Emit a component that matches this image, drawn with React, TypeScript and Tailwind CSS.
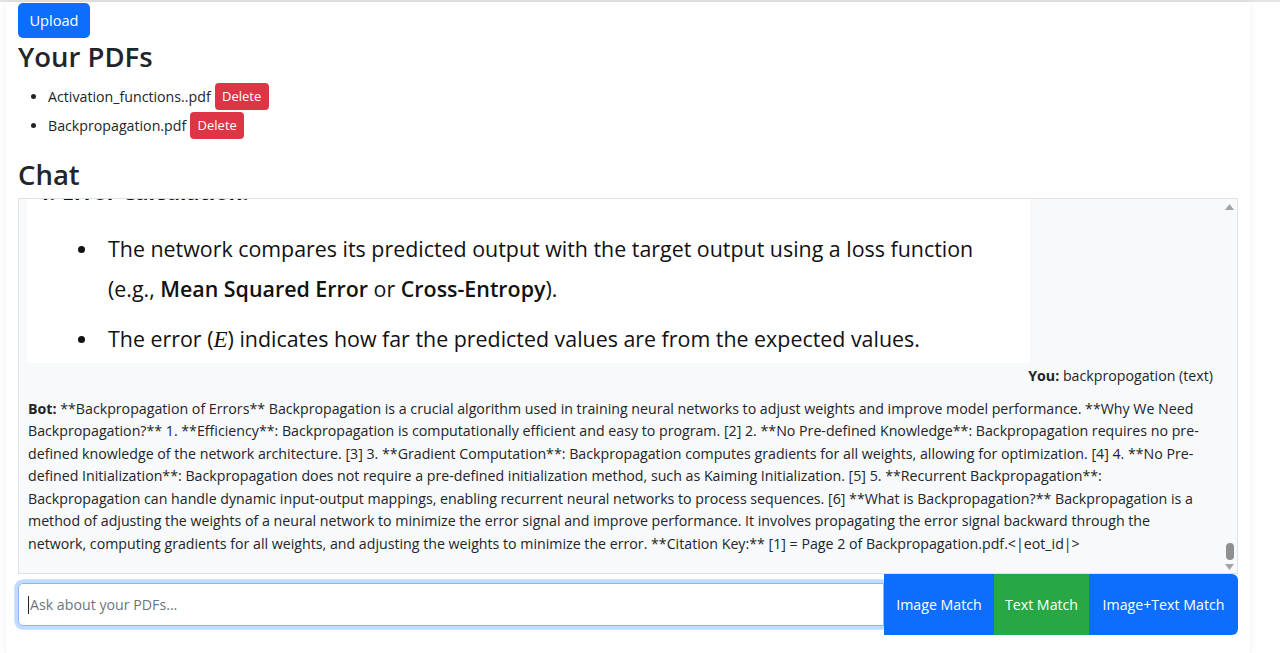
import React from "react";

const botLines: React.ReactNode[] = [
  <>
    <b className="font-bold">Bot:</b> **Backpropagation of Errors** Backpropagation is a crucial algorithm used in training neural networks to adjust weights and improve model performance. **Why We Need
  </>,
  "Backpropagation?** 1. **Efficiency**: Backpropagation is computationally efficient and easy to program. [2] 2. **No Pre-defined Knowledge**: Backpropagation requires no pre-",
  "defined knowledge of the network architecture. [3] 3. **Gradient Computation**: Backpropagation computes gradients for all weights, allowing for optimization. [4] 4. **No Pre-",
  "defined Initialization**: Backpropagation does not require a pre-defined initialization method, such as Kaiming Initialization. [5] 5. **Recurrent Backpropagation**:",
  "Backpropagation can handle dynamic input-output mappings, enabling recurrent neural networks to process sequences. [6] **What is Backpropagation?** Backpropagation is a",
  "method of adjusting the weights of a neural network to minimize the error signal and improve performance. It involves propagating the error signal backward through the",
  "network, computing gradients for all weights, and adjusting the weights to minimize the error. **Citation Key:** [1] = Page 2 of Backpropagation.pdf.<|eot_id|>",
];

function Dot() {
  return (
    <span className="flex w-[81px] shrink-0 items-center pl-[51px]">
      <span className="h-[7px] w-[7px] rounded-full bg-[#111]" />
    </span>
  );
}

function PdfSnippet() {
  return (
    <div className="flex w-[1003px] shrink-0 flex-col bg-white pb-[3px] text-[21.4px] text-[#111]">
      <div className="flex h-[26px] items-center leading-[26px] font-bold">
        <span className="w-[35px] pl-[10px]">4.</span>
        <span>Error Calculation:</span>
      </div>
      <div className="mt-[24px] flex leading-[40px]">
        <Dot />
        <span>The network compares its predicted output with the target output using a loss function</span>
      </div>
      <div className="flex leading-[40px]">
        <span className="w-[81px] shrink-0"></span>
        <span>
          (e.g., <b className="font-semibold">Mean Squared Error</b> or <b className="font-semibold">Cross-Entropy</b>).
        </span>
      </div>
      <div className="mt-[10px] flex leading-[40px]">
        <Dot />
        <span>
          The error (<i className="font-['Liberation_Serif',serif] text-[23px]">E</i>) indicates how far the predicted values are from the expected values.
        </span>
      </div>
    </div>
  );
}

function Scrollbar() {
  return (
    <div className="flex w-[15px] shrink-0 flex-col items-center justify-between pt-[5px] pb-[3px]">
      <svg width="9" height="6" viewBox="0 0 9 6">
        <path d="M4.5 0 L9 6 L0 6 Z" fill="#a3a3a3" />
      </svg>
      <div className="flex flex-col items-center gap-[4px]">
        <div className="h-[17px] w-[8px] rounded-[4px] bg-[#8f8f8f]" />
        <svg width="9" height="6" viewBox="0 0 9 6">
          <path d="M0 0 L9 0 L4.5 6 Z" fill="#a3a3a3" />
        </svg>
      </div>
    </div>
  );
}

export default function App() {
  return (
    <div className="min-h-[653px] bg-white font-['Open_Sans',sans-serif] text-[14.2px] text-[#212529]">
      <div className="h-[2px] w-full bg-[#e4e4e4]" />
      <div className="ml-[6px] min-h-[651px] w-[1244px] bg-white px-[12px] pt-[1px] shadow-[0_0_7px_rgba(0,0,0,0.07)]">
        <button className="flex h-[35px] w-[72px] items-center justify-center rounded-[5px] bg-[#0d6efd] text-[14.6px] text-white">
          Upload
        </button>
        <h2 className="mt-[1px] mb-[7px] text-[27.5px] leading-[36px] font-semibold">Your PDFs</h2>
        <ul className="mb-[17px] list-disc pl-[30px]">
          <li className="h-[29px]">
            <div className="inline-flex h-[29px] items-center">
              <span>Activation_functions..pdf</span>
              <button className="ml-[4px] flex h-[27px] w-[54px] items-center justify-center rounded-[4px] bg-[#dc3545] text-[13px] text-white">
                Delete
              </button>
            </div>
          </li>
          <li className="h-[29px]">
            <div className="inline-flex h-[29px] items-center">
              <span>Backpropagation.pdf</span>
              <button className="ml-[4px] flex h-[27px] w-[54px] items-center justify-center rounded-[4px] bg-[#dc3545] text-[13px] text-white">
                Delete
              </button>
            </div>
          </li>
        </ul>
        <h2 className="mb-[5px] text-[27.5px] leading-[36px] font-semibold">Chat</h2>
        <div className="flex h-[376px] w-[1220px] border border-[#dee2e6] bg-[#f8f9fa]">
          <div className="flex flex-1 flex-col justify-end overflow-hidden pl-[8px] pb-[18px]">
            <PdfSnippet />
            <div className="mt-[2px] pr-[9px] text-right leading-[22.5px]">
              <b className="font-bold">You:</b> backpropogation (text)
            </div>
            <div className="mt-[10px] pl-[1px] leading-[22.5px]">
              {botLines.map((l, i) => (
                <div key={i} className="whitespace-nowrap">
                  {l}
                </div>
              ))}
            </div>
          </div>
          <Scrollbar />
        </div>
        <div className="flex h-[61px] w-[1220px] items-center">
          <div className="flex h-[43px] flex-1 items-center rounded-l-[5px] border border-[#86b7fe] bg-white pl-[9px] shadow-[0_0_0_3.75px_rgba(13,110,253,0.25)]">
            <span className="mr-[1px] h-[18px] w-[1px] bg-[#222]" />
            <span className="text-[#6c757d]">Ask about your PDFs...</span>
          </div>
          <button className="flex h-[61px] w-[110px] items-center justify-center bg-[#0d6efd] text-white">Image Match</button>
          <button className="flex h-[61px] w-[95px] items-center justify-center bg-[#28a745] text-white">Text Match</button>
          <button className="flex h-[61px] w-[149px] items-center justify-center rounded-r-[6px] bg-[#0d6efd] text-white">
            Image+Text Match
          </button>
        </div>
      </div>
    </div>
  );
}
